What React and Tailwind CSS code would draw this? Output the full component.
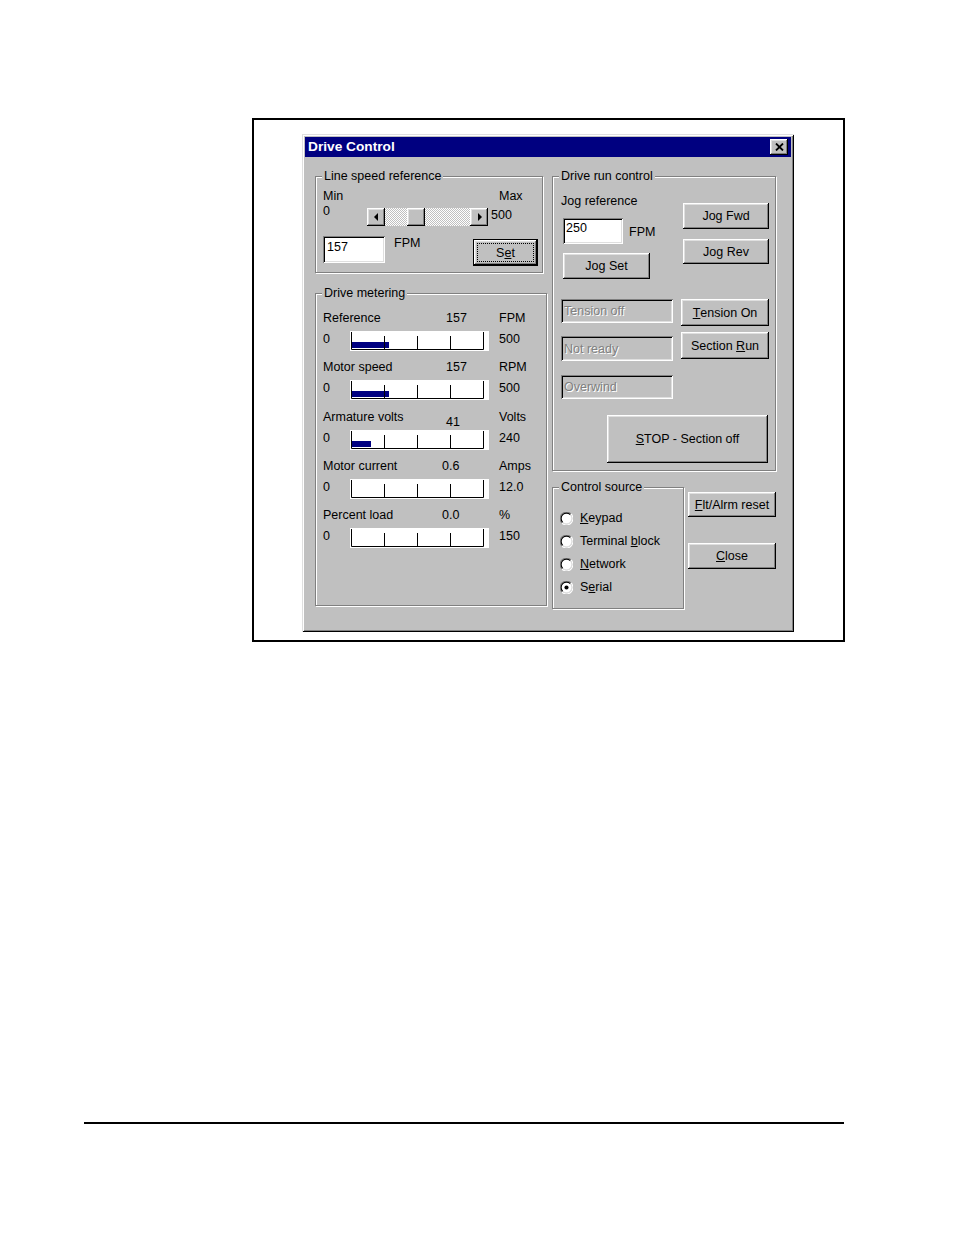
const raised =
  "bg-[#c0c0c0] shadow-[inset_-1px_-1px_0_#000,inset_1px_1px_0_#fff,inset_-2px_-2px_0_#808080,inset_2px_2px_0_#dfdfdf]";
const sunken =
  "shadow-[inset_1px_1px_0_#808080,inset_-1px_-1px_0_#fff,inset_2px_2px_0_#000,inset_-2px_-2px_0_#dfdfdf]";

const metrics = [
  { label: "Reference", value: "157", unit: "FPM", max: "500", fill: 38 },
  { label: "Motor speed", value: "157", unit: "RPM", max: "500", fill: 38 },
  { label: "Armature volts", value: "41", unit: "Volts", max: "240", fill: 20, vcls: "w-[53px] mt-[5px]" },
  { label: "Motor current", value: "0.6", unit: "Amps", max: "12.0", fill: 0, vcls: "w-[57px] -ml-[4px]" },
  { label: "Percent load", value: "0.0", unit: "%", max: "150", fill: 0, vcls: "w-[57px] -ml-[4px]" },
];

function Btn({ children, className = "" }) {
  return (
    <button type="button" className={`flex items-center justify-center leading-[14px] ${raised} ${className}`}>
      {children}
    </button>
  );
}

function Group({ label, className = "", children }) {
  return (
    <fieldset className={`border border-[#808080] shadow-[1px_1px_0_#fff,inset_1px_1px_0_#fff] ${className}`}>
      <legend className="ml-[6px] px-[2px] leading-[14px] bg-[#c0c0c0]">{label}</legend>
      {children}
    </fieldset>
  );
}

function Disabled({ children, className = "" }) {
  return (
    <div className={`flex items-center pl-[3px] bg-[#c0c0c0] text-[#808080] [text-shadow:1px_1px_0_#fff] ${sunken} ${className}`}>
      {children}
    </div>
  );
}

function Arrow({ left }) {
  return (
    <div className={`w-[18px] h-[18px] flex items-center justify-center ${raised}`}>
      <svg width="5" height="8" viewBox="0 0 5 8">
        <polygon points={left ? "4,0 4,8 0,4" : "1,0 1,8 5,4"} fill="#000" />
      </svg>
    </div>
  );
}

function Meter({ fill }) {
  return (
    <svg width="139" height="20" className="block">
      <rect width="139" height="20" fill="#fff" />
      {fill > 0 && <rect x="1" y="11" width={fill} height="6" fill="#000080" />}
      <path
        d="M1.5 1V18.5H133.5M34.5 5V18M67.5 5V18M100.5 5V18M133.5 1V18.5"
        stroke="#000"
        fill="none"
      />
    </svg>
  );
}

function Radio({ checked }) {
  return (
    <svg width="13" height="13" viewBox="0 0 12 12" className="block">
      <circle cx="6" cy="6" r="5" fill="#fff" />
      <path d="M10.2 1.8A5.9 5.9 0 0 0 1.8 10.2" stroke="#808080" fill="none" />
      <path d="M1.8 10.2A5.9 5.9 0 0 0 10.2 1.8" stroke="#fff" fill="none" />
      <path d="M9.5 2.5A4.9 4.9 0 0 0 2.5 9.5" stroke="#000" fill="none" />
      <path d="M2.5 9.5A4.9 4.9 0 0 0 9.5 2.5" stroke="#dfdfdf" fill="none" />
      {checked && <circle cx="6" cy="6" r="1.9" fill="#000" />}
    </svg>
  );
}

function Metric({ label, value, unit, max, fill, vcls = "w-[53px]" }) {
  return (
    <div className="h-[49.25px]">
      <div className="flex h-[21px] pt-[1px] leading-[14px]">
        <span className="w-[123px]">{label}</span>
        <span className={vcls}>{value}</span>
        <span>{unit}</span>
      </div>
      <div className="flex items-center h-[20px] leading-[14px]">
        <span className="w-[27px] -mt-[4px]">0</span>
        <Meter fill={fill} />
        <span className="ml-[10px] -mt-[4px]">{max}</span>
      </div>
    </div>
  );
}

function Dialog() {
  return (
    <div className="w-[492px] h-[498px] p-[3px] bg-[#c0c0c0] shadow-[inset_1px_1px_0_#dfdfdf,inset_-1px_-1px_0_#000,inset_2px_2px_0_#fff,inset_-2px_-2px_0_#808080]">
      <div className="h-[20px] bg-[#000080] flex items-center justify-between pl-[3px] pr-[3px]">
        <span className="text-white font-bold text-[13.7px] leading-none">Drive Control</span>
        <div className={`w-[18px] h-[16px] flex items-center justify-center ${raised}`}>
          <svg width="9" height="8" viewBox="0 0 9 8">
            <path d="M1 0.5L8 7.5M8 0.5L1 7.5" stroke="#000" strokeWidth="1.8" />
          </svg>
        </div>
      </div>

      <div className="flex pt-[12px] pl-[10px]">
        <div className="w-[232px]">
          <Group label="Line speed reference" className="w-[228px] h-[104px]">
            <div className="pl-[7px] pt-[6px] leading-[14px]">
              <div className="flex">
                <span className="w-[176px]">Min</span>
                <span>Max</span>
              </div>
              <div className="flex items-start">
                <span className="w-[44px] mt-[1px]">0</span>
                <div className="flex w-[121px] h-[18px] mt-[5px]">
                  <Arrow left />
                  <div className="flex-1 bg-[repeating-conic-gradient(#c0c0c0_0_25%,#fff_0_50%)] bg-size-[2px_2px]">
                    <div className={`ml-[22px] w-[18px] h-[18px] ${raised}`} />
                  </div>
                  <Arrow />
                </div>
                <span className="ml-[3px] mt-[5px]">500</span>
              </div>
              <div className="flex items-start mt-[10px]">
                <div className={`w-[62px] h-[27px] bg-white pl-[4px] pt-[4px] ${sunken}`}>157</div>
                <span className="ml-[9px] w-[79px]">FPM</span>
                <button type="button" className="mt-[3px] w-[65px] h-[27px] border border-black flex">
                  <span className={`flex flex-1 p-[3px] ${raised}`}>
                    <span className="flex flex-1 items-center justify-center border border-dotted border-black">
                      S<span className="underline">e</span>t
                    </span>
                  </span>
                </button>
              </div>
            </div>
          </Group>

          <Group label="Drive metering" className="w-[232px] h-[320px] mt-[13px]">
            <div className="pl-[7px] pt-[10px]">
              {metrics.map((m) => (
                <Metric key={m.label} {...m} />
              ))}
            </div>
          </Group>
        </div>

        <div className="ml-[5px] w-[225px]">
          <Group label="Drive run control" className="w-[224px] h-[302px]">
            <div className="pl-[8px] leading-[14px]">
              <div className="flex">
                <div className="w-[122px]">
                  <div className="mt-[11px]">Jog reference</div>
                  <div className="flex items-start mt-[10px]">
                    <div className={`ml-[2px] w-[60px] h-[26px] bg-white pl-[3px] pt-[3px] ${sunken}`}>250</div>
                    <span className="ml-[6px] mt-[7px]">FPM</span>
                  </div>
                  <Btn className="ml-[2px] mt-[9px] w-[87px] h-[26px]">Jog Set</Btn>
                </div>
                <div>
                  <Btn className="mt-[20px] w-[86px] h-[26px]">Jog Fwd</Btn>
                  <Btn className="mt-[10px] w-[86px] h-[25px]">Jog Rev</Btn>
                </div>
              </div>
              <div className="flex items-start mt-[20px]">
                <Disabled className="w-[112px] h-[24px]">Tension off</Disabled>
                <Btn className="ml-[8px] w-[88px] h-[27px]">
                  <span className="underline">T</span>ension On
                </Btn>
              </div>
              <div className="flex items-start mt-[6px]">
                <Disabled className="mt-[4px] w-[112px] h-[25px]">Not ready</Disabled>
                <Btn className="ml-[8px] w-[88px] h-[27px]">
                  Section&nbsp;<span className="underline">R</span>un
                </Btn>
              </div>
              <Disabled className="mt-[14px] w-[112px] h-[24px]">Overwind</Disabled>
              <Btn className="mt-[16px] ml-[46px] w-[161px] h-[48px]">
                <span className="underline">S</span>TOP - Section off
              </Btn>
            </div>
          </Group>

          <div className="flex mt-[9px]">
            <Group label="Control source" className="w-[132px] h-[129px]">
              <div className="pl-[7px] pt-[13px]">
                <div className="flex items-center h-[23px]">
                  <Radio />
                  <span className="ml-[7px]"><span className="underline">K</span>eypad</span>
                </div>
                <div className="flex items-center h-[23px]">
                  <Radio />
                  <span className="ml-[7px]">Terminal <span className="underline">b</span>lock</span>
                </div>
                <div className="flex items-center h-[23px]">
                  <Radio />
                  <span className="ml-[7px]"><span className="underline">N</span>etwork</span>
                </div>
                <div className="flex items-center h-[23px]">
                  <Radio checked />
                  <span className="ml-[7px]">S<span className="underline">e</span>rial</span>
                </div>
              </div>
            </Group>
            <div className="ml-[4px]">
              <Btn className="mt-[12px] w-[88px] h-[25px]">
                <span className="underline">F</span>lt/Alrm reset
              </Btn>
              <Btn className="mt-[26px] w-[88px] h-[26px]">
                <span className="underline">C</span>lose
              </Btn>
            </div>
          </div>
        </div>
      </div>
    </div>
  );
}

export default function App() {
  return (
    <div className="min-h-[1235px] bg-white text-black text-[12.5px] font-['Liberation_Sans',Arial,sans-serif]">
      <div className="pt-[118px] pl-[252px]">
        <div className="w-[593px] h-[524px] border-2 border-black pt-[14px] pl-[48px]">
          <Dialog />
        </div>
      </div>
      <div className="mt-[480px] ml-[84px] w-[760px] h-[2px] bg-black" />
    </div>
  );
}
